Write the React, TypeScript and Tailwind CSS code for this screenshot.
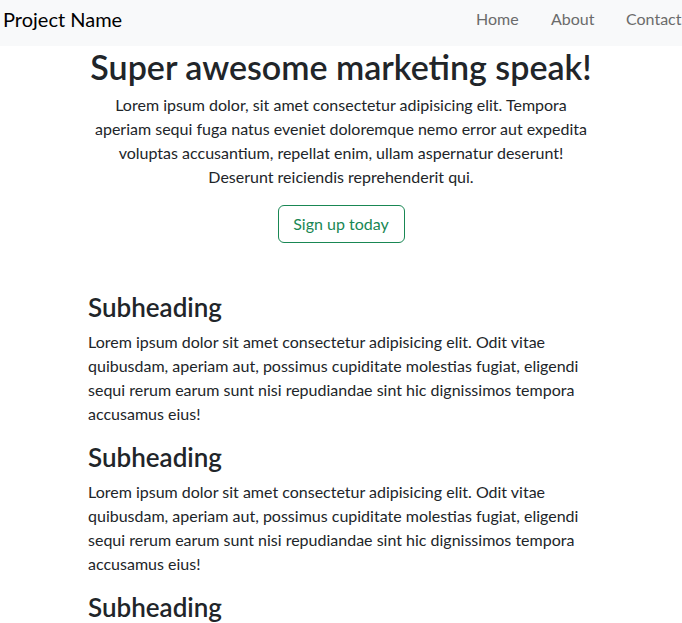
import React from "react";

const lorem =
  "Lorem ipsum dolor sit amet consectetur adipisicing elit. Odit vitae quibusdam, aperiam aut, possimus cupiditate molestias fugiat, eligendi sequi rerum earum sunt nisi repudiandae sint hic dignissimos tempora accusamus eius!";

const Section = () => (
  <div>
    <h3 className="text-[26px] leading-[30px] font-semibold mb-2">Subheading</h3>
    <p className="text-base leading-6 mb-4">{lorem}</p>
  </div>
);

export default function App() {
  return (
    <div className="min-h-screen bg-white text-[#212529] font-['Lato','Liberation_Sans',sans-serif] overflow-hidden">
      {/* navbar */}
      <nav className="h-[46px] bg-[#f8f9fa] flex items-start">
        <a className="pl-[3px] pt-[4px] text-[20px] leading-[30px] text-black">Project Name</a>
        <ul className="ml-auto flex pt-[7px] text-base leading-6 text-[#6b6b6b]">
          <li className="w-[75px]">Home</li>
          <li className="w-[75px]">About</li>
          <li className="w-[56px] whitespace-nowrap">Contact</li>
        </ul>
      </nav>

      {/* hero */}
      <div className="w-[516px] mx-auto text-center pt-[2px]">
        <h1 className="text-[34px] leading-[38px] font-semibold mb-[7px]">Super awesome marketing speak!</h1>
        <p className="w-[500px] mx-auto text-base leading-6 mb-4">
          Lorem ipsum dolor, sit amet consectetur adipisicing elit. Tempora aperiam sequi fuga natus eveniet
          doloremque nemo error aut expedita voluptas accusantium, repellat enim, ullam aspernatur deserunt!
          Deserunt reiciendis reprehenderit qui.
        </p>
        <button className="h-[38px] w-[127px] border border-[#198754] text-[#198754] rounded-md text-base">
          Sign up today
        </button>
      </div>

      {/* content */}
      <div className="w-[506px] mx-auto mt-[49px]">
        <Section />
        <Section />
        <Section />
      </div>
    </div>
  );
}
